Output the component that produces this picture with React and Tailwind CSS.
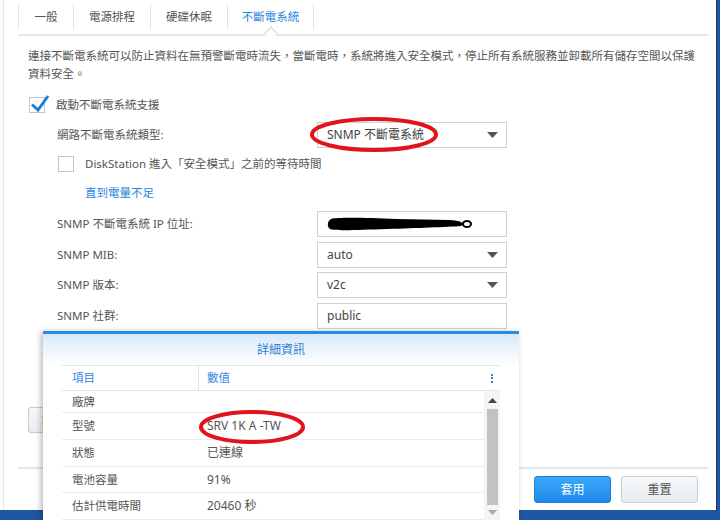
import React from 'react'

const tabs = [
  { label: '一般', w: 'w-[55px]' },
  { label: '電源排程', w: 'w-[77px]' },
  { label: '硬碟休眠', w: 'w-[77px]' },
  { label: '不斷電系統', w: 'w-[87px]', active: true },
]

const details = [
  { k: '廠牌', v: '', h: 'h-[22px]' },
  { k: '型號', v: 'SRV 1K A -TW', h: 'h-[27px]' },
  { k: '狀態', v: '已連線', h: 'h-[27px]' },
  { k: '電池容量', v: '91%', h: 'h-[26px]' },
  { k: '估計供電時間', v: '20460 秒', h: 'h-[27px]' },
]

const Caret = () => (
  <svg width="11" height="6" viewBox="0 0 11 6" className="shrink-0">
    <path d="M0 0h11L5.5 6z" fill="#555" />
  </svg>
)

const Select = ({ value }) => (
  <div className="w-[190px] h-[26px] border border-[#c9d3de] bg-white flex items-center justify-between pl-[9px] pr-[8px] text-[#444] text-[12px]">
    <span>{value}</span>
    <Caret />
  </div>
)

const TextBox = ({ children }) => (
  <div className="w-[190px] h-[26px] border border-[#c9d3de] bg-white flex items-center pl-[9px] text-[#444] text-[12px]">
    {children}
  </div>
)

const Field = ({ label, className = '', children }) => (
  <div className={`flex items-center h-[26px] ${className}`}>
    <div className="w-[289px] pl-[29px] text-[11.5px] text-[#555]">{label}</div>
    {children}
  </div>
)

export default function App() {
  return (
    <div className="relative w-[720px] h-[520px] overflow-hidden bg-[#1f56a3] font-['Noto_Sans','Noto_Sans_CJK_TC',sans-serif]">
      <div className="w-[717px] h-[510px] bg-white flex border-r border-[#1b3f73]">
        <div className="w-[3px]" />
        <div className="w-px bg-[#e3e6ea]" />
        <div className="flex-1 flex flex-col pl-[14px] pr-[8px]">
          {/* tabs */}
          <div className="h-[34px] flex items-start pt-[4px]">
            {tabs.map((t, i) => (
              <div
                key={t.label}
                className={`relative ${t.w} h-[26px] flex items-center justify-center border-l border-[#dfe5ec] text-[11.5px] ${i === tabs.length - 1 ? 'border-r' : ''} ${t.active ? 'text-[#1f86e0]' : 'text-[#555]'}`}
              >
                {t.label}
                {t.active && (
                  <div className="absolute left-1/2 -bottom-[8px] -ml-[5px] w-[10px] h-[10px] rotate-45 bg-white border-l-2 border-t-2 border-[#e4e6e9]" />
                )}
              </div>
            ))}
          </div>
          <div className="h-[2px] bg-[#e4e6e9]" />

          <div className="pl-[10px] flex flex-col">
            <div className="mt-[11px] text-[11.5px] leading-[18px] text-[#555] whitespace-nowrap">
              <div>連接不斷電系統可以防止資料在無預警斷電時流失，當斷電時，系統將進入安全模式，停止所有系統服務並卸載所有儲存空間以保護</div>
              <div>資料安全。</div>
            </div>

            <div className="mt-[12px] h-[20px] flex items-center">
              <div className="relative ml-[1px] w-[16px] h-[16px] border border-[#bcc7d3] bg-white">
                <svg className="absolute -left-[1px] -top-[4px] overflow-visible" width="20" height="18" viewBox="0 0 20 18">
                  <path d="M3 10.5 L9 16 L19 2" fill="none" stroke="#1c7fd6" strokeWidth="3" />
                </svg>
              </div>
              <span className="ml-[11px] text-[11.5px] text-[#555]">啟動不斷電系統支援</span>
            </div>

            <Field label="網路不斷電系統類型:" className="mt-[7px]">
              <Select value="SNMP 不斷電系統" />
            </Field>

            <div className="mt-[8px] h-[16px] flex items-center pl-[30px]">
              <div className="w-[16px] h-[16px] border border-[#bcc7d3] bg-white" />
              <span className="ml-[11px] text-[11.5px] text-[#555]">DiskStation 進入「安全模式」之前的等待時間</span>
            </div>

            <div className="mt-[12px] h-[18px] flex items-center pl-[57px] text-[11.5px] text-[#1f86e0]">直到電量不足</div>

            <Field label="SNMP 不斷電系統 IP 位址:" className="mt-[9px]">
              <TextBox>
                <svg width="146" height="16" viewBox="0 0 146 16">
                  <path d="M4 3 C12 1 40 2 70 3 L122 4 C128 4 132 5 134 6 L134 10 C120 11 90 12 60 13 C30 14 8 15 3 13 C0 11 0 5 4 3 Z" fill="#000" />
                  <path d="M132 8 L136 8" stroke="#000" strokeWidth="3" />
                  <ellipse cx="140" cy="8" rx="4" ry="3" fill="none" stroke="#000" strokeWidth="2" />
                </svg>
              </TextBox>
            </Field>
            <Field label="SNMP MIB:" className="mt-[5px]">
              <Select value="auto" />
            </Field>
            <Field label="SNMP 版本:" className="mt-[4px]">
              <Select value="v2c" />
            </Field>
            <Field label="SNMP 社群:" className="mt-[5px]">
              <TextBox>public</TextBox>
            </Field>

            {/* button mostly hidden behind the popup */}
            <div className="mt-[78px] h-[26px] flex">
              <div className="w-[17px] h-[26px] overflow-hidden border border-r-0 border-[#c5ccd4] rounded-l-[3px] bg-gradient-to-b from-[#f7f9fb] to-[#e9edf1] flex items-center pl-[13px] text-[11.5px] text-[#555] whitespace-nowrap">詳</div>
            </div>
          </div>

          <div className="mt-[34px] h-[2px] bg-[#e4e6e9]" />
          <div className="mt-[7px] flex justify-end gap-[10px] pr-[10px]">
            <div className="w-[77px] h-[27px] rounded-[3px] border border-[#1b82dc] bg-gradient-to-b from-[#3ca8f8] to-[#1d8ae8] flex items-center justify-center text-white text-[12px]">套用</div>
            <div className="w-[77px] h-[27px] rounded-[3px] border border-[#c5ccd4] bg-gradient-to-b from-[#f7f9fb] to-[#e8ecf0] flex items-center justify-center text-[#555] text-[12px]">重置</div>
          </div>
        </div>
      </div>

      {/* details popup */}
      <div className="absolute left-[43px] top-[331px] w-[476px] h-[200px] bg-white border-t-[3px] border-[#2b8be3] shadow-[-2px_1px_6px_rgba(0,0,0,0.28)] flex flex-col">
        <div className="h-[31px] bg-gradient-to-b from-[#d8e9fb] to-white flex items-center justify-center text-[12px] text-[#2f80d4]">詳細資訊</div>
        <div className="px-[19px] flex flex-col">
          <div className="h-[26px] flex border-t border-b border-[#e2e7ed] text-[11.5px] text-[#2f86dc]">
            <div className="w-[137px] pl-[10px] flex items-center border-r border-[#e2e7ed]">項目</div>
            <div className="flex-1 pl-[8px] flex items-center">數值</div>
            <div className="w-[16px] flex flex-col items-center justify-center gap-[1.5px]">
              <div className="w-[2px] h-[2px] bg-[#2f86dc]" />
              <div className="w-[2px] h-[2px] bg-[#2f86dc]" />
              <div className="w-[2px] h-[2px] bg-[#2f86dc]" />
            </div>
          </div>
          <div className="flex">
            <div className="flex-1 flex flex-col">
              {details.map((d) => (
                <div key={d.k} className={`${d.h} flex items-center border-b border-[#e8ebef] text-[11.5px] text-[#555]`}>
                  <div className="w-[137px] pl-[10px]">{d.k}</div>
                  <div className="pl-[8px] text-[12px]">{d.v}</div>
                </div>
              ))}
            </div>
            <div className="w-[16px] flex flex-col items-center bg-[#f4f4f4] pl-[1px]">
              <div className="h-[18px] flex items-center justify-center">
                <svg width="9" height="5" viewBox="0 0 9 5"><path d="M0 5h9L4.5 0z" fill="#444" /></svg>
              </div>
              <div className="w-[11px] h-[96px] bg-[#c2c2c2]" />
              <div className="h-[14px] flex items-center justify-center">
                <svg width="9" height="5" viewBox="0 0 9 5"><path d="M0 0h9L4.5 5z" fill="#aaa" /></svg>
              </div>
            </div>
          </div>
        </div>
      </div>

      {/* red markup */}
      <svg className="absolute left-0 top-0 pointer-events-none" width="720" height="520" viewBox="0 0 720 520">
        <ellipse cx="374" cy="134.5" rx="62" ry="15.5" fill="none" stroke="#e1131b" strokeWidth="4" />
        <ellipse cx="252" cy="427" rx="51" ry="15" fill="none" stroke="#e1131b" strokeWidth="4" />
      </svg>
    </div>
  )
}
